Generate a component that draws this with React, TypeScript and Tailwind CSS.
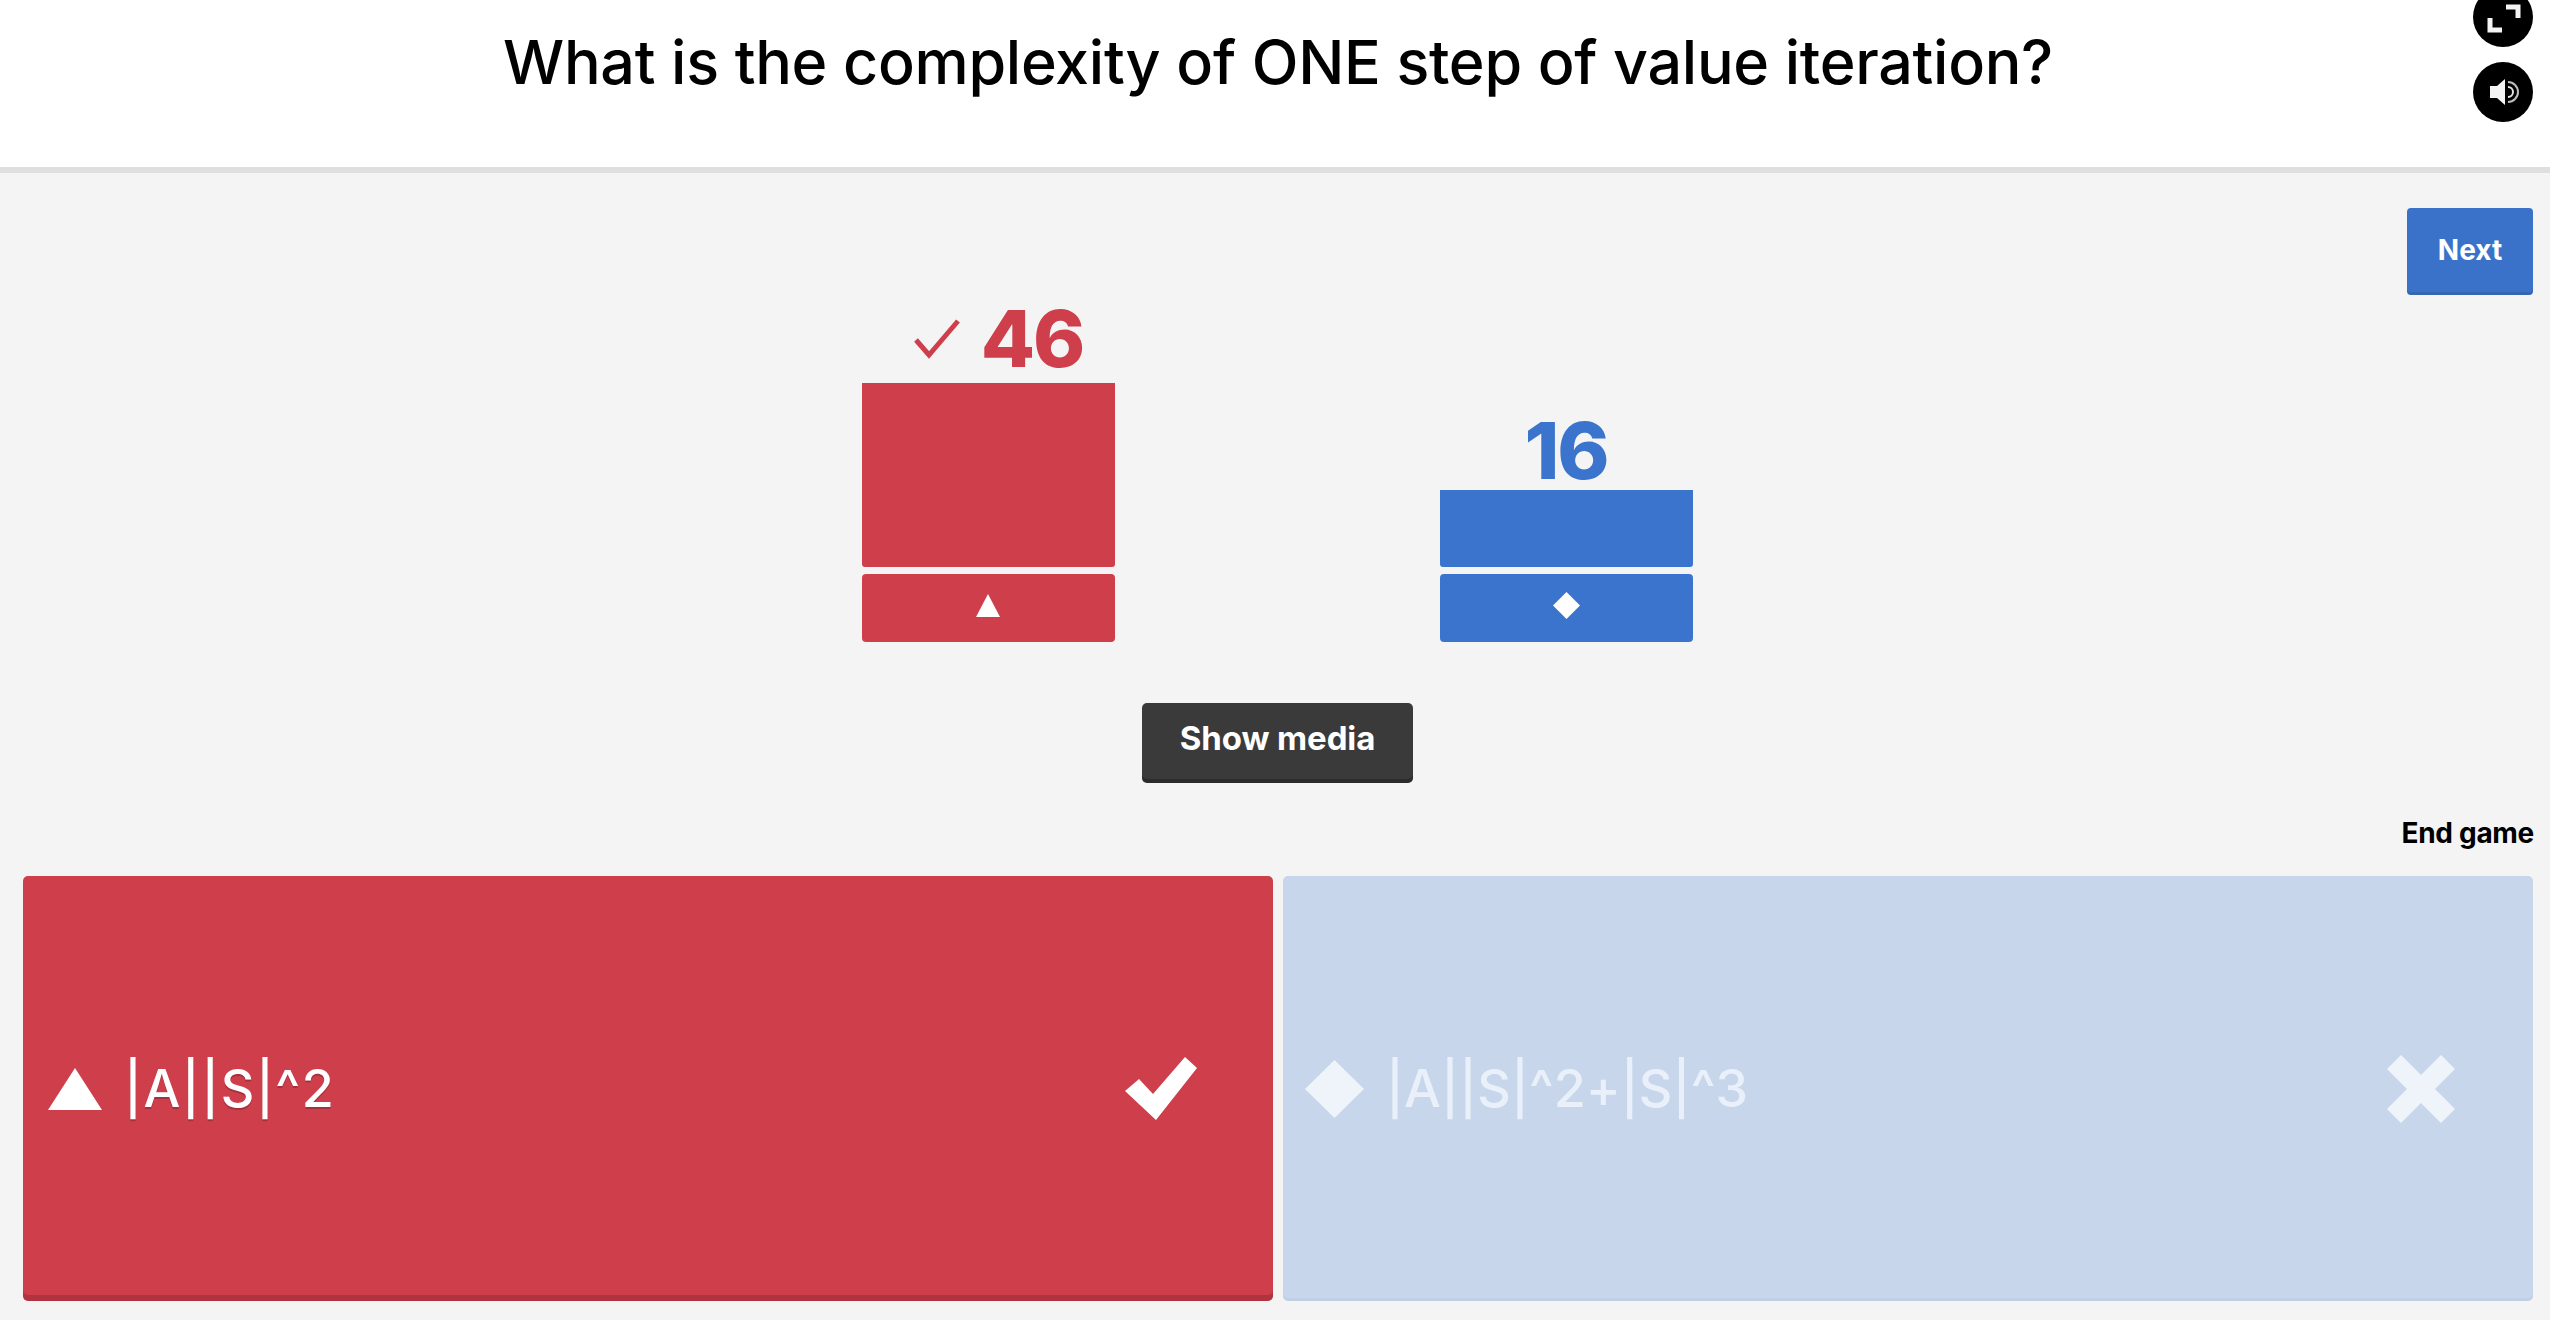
const FONT = "font-['Inter','Noto_Sans',sans-serif]";

function ExpandIcon() {
  return (
    <svg viewBox="0 0 60 60" className="h-full w-full" fill="none" stroke="#f4f4f4" strokeWidth="5">
      <path d="M33 20h12v11" />
      <path d="M17 31v12h12" />
    </svg>
  );
}

function SpeakerIcon() {
  return (
    <svg viewBox="0 0 60 60" className="h-full w-full">
      <path d="M17 24h7l8-7v26l-8-7h-7z" fill="#f4f4f4" />
      <path d="M35 25a5 5 0 0 1 0 10" fill="none" stroke="#e4e4e4" strokeWidth="2" />
      <path d="M35 20a10 10 0 0 1 0 20" fill="none" stroke="#bdbdbd" strokeWidth="2" />
    </svg>
  );
}

function Bar({
  color,
  text,
  label,
  height,
  mark,
  children,
}: {
  color: string;
  text: string;
  label: string;
  height: string;
  mark?: boolean;
  children: React.ReactNode;
}) {
  return (
    <div className="flex w-[253px] flex-col items-center">
      {mark ? (
        <div className={`mb-[5px] flex h-[66px] items-center justify-center gap-[21px] pl-[21px] text-[79px] leading-none font-extrabold tracking-[-2px] ${text}`}>
          <svg viewBox="0 0 46 40" className="mt-[2px] h-[40px] w-[46px]" fill="none" stroke="currentColor" strokeWidth="5">
            <path d="M2 21l13 15L44 2" />
          </svg>
          <span>{label}</span>
        </div>
      ) : (
        <div className={`flex h-[66px] items-center justify-center text-[79px] leading-none font-extrabold tracking-[-2px] ${text}`}>
          <span>{label}</span>
        </div>
      )}
      <div className={`mt-[7px] w-full rounded-b-[3px] ${color} ${height}`} />
      <div className={`mt-[7px] flex h-[68px] w-full items-center justify-center rounded-[4px] ${color}`}>{children}</div>
    </div>
  );
}

export default function App() {
  return (
    <div className={`flex h-[1320px] w-full flex-col overflow-hidden bg-[#f4f4f5] ${FONT}`}>
      {/* Question */}
      <header className="relative flex h-[173px] shrink-0 items-start justify-center border-b-[6px] border-[#dfdfdf] bg-white pt-[24px] pl-[6px]">
        <h1 className="text-[61px] leading-[76px] font-medium tracking-[-0.3px] text-black">
          What is the complexity of ONE step of value iteration?
        </h1>
        <div className="absolute top-[-13px] right-[17px] flex flex-col gap-[15px]">
          <button className="h-[60px] w-[60px] rounded-full bg-black">
            <ExpandIcon />
          </button>
          <button className="h-[60px] w-[60px] rounded-full bg-black">
            <SpeakerIcon />
          </button>
        </div>
      </header>

      <main className="flex flex-1 flex-col">
        <div className="flex justify-end pt-[35px] pr-[17px]">
          <button className="h-[87px] w-[126px] rounded-[4px] bg-[#3a72c9] pb-[3px] text-[28px] font-bold text-white shadow-[inset_0_-3px_0_rgba(0,0,0,0.1)]">
            Next
          </button>
        </div>

        {/* Results chart */}
        <div className="flex items-end justify-center gap-[325px] pt-[10px] pl-[4px]">
          <Bar color="bg-[#ce3e4b]" text="text-[#ce3e4b]" label="46" height="h-[184px]" mark>
            <svg viewBox="0 0 24 23" className="h-[23px] w-[24px] -translate-y-[3px]">
              <path d="M12 0l12 23H0z" fill="#fff" />
            </svg>
          </Bar>
          <Bar color="bg-[#3b74cc]" text="text-[#3b74cc]" label="16" height="h-[77px]">
            <svg viewBox="0 0 27 27" className="h-[27px] w-[27px] -translate-y-[3px]">
              <path d="M13.5 0L27 13.5 13.5 27 0 13.5z" fill="#fff" />
            </svg>
          </Bar>
        </div>

        <div className="flex justify-center pt-[61px] pl-[5px]">
          <button className="h-[80px] w-[271px] rounded-[5px] bg-[#3a3a3a] pb-[8px] text-[33px] font-bold tracking-[-0.1px] text-white shadow-[inset_0_-4px_0_rgba(0,0,0,0.25)]">
            Show media
          </button>
        </div>

        <div className="flex justify-end pt-[34px] pr-[16px] text-[28px] leading-[32px] font-bold tracking-[-0.3px] text-black">End game</div>

        {/* Answers */}
        <div className="grid grid-cols-2 gap-[10px] pt-[27px] pr-[17px] pl-[23px]">
          <div className="flex h-[425px] items-center justify-between rounded-[5px] bg-[#ce3e4b] pr-[76px] pl-[25px] shadow-[inset_0_-6px_0_rgba(0,0,0,0.15)]">
            <div className="flex items-center gap-[22px] text-[52px] leading-none font-medium tracking-[1.5px] text-white [text-shadow:0_2px_0_rgba(0,0,0,0.2)]">
              <svg viewBox="0 0 54 42" className="h-[42px] w-[54px]">
                <path d="M27 0l27 42H0z" fill="#fff" />
              </svg>
              <span>|A||S|^2</span>
            </div>
            <svg viewBox="0 0 72 63" className="h-[63px] w-[72px]">
              <path d="M0 34l14-12 14 15L60 0l12 11-41 52z" fill="#fff" />
            </svg>
          </div>
          <div className="flex h-[425px] items-center justify-between rounded-[5px] bg-[#c7d6eb] pr-[78px] pl-[22px] shadow-[inset_0_-3px_0_rgba(0,0,0,0.03)]">
            <div className="flex items-center gap-[22px] text-[52px] leading-none font-medium tracking-[0.1px] text-[#e9f0f9]">
              <svg viewBox="0 0 59 58" className="h-[58px] w-[59px]">
                <path d="M29.5 0L59 29 29.5 58 0 29z" fill="#eff4fb" />
              </svg>
              <span>|A||S|^2+|S|^3</span>
            </div>
            <svg viewBox="0 0 68 68" className="h-[68px] w-[68px]">
              <path d="M14 0l20 20L54 0l14 14-20 20 20 20-14 14-20-20-20 20L0 54l20-20L0 14z" fill="#eff4fb" />
            </svg>
          </div>
        </div>
      </main>
    </div>
  );
}
